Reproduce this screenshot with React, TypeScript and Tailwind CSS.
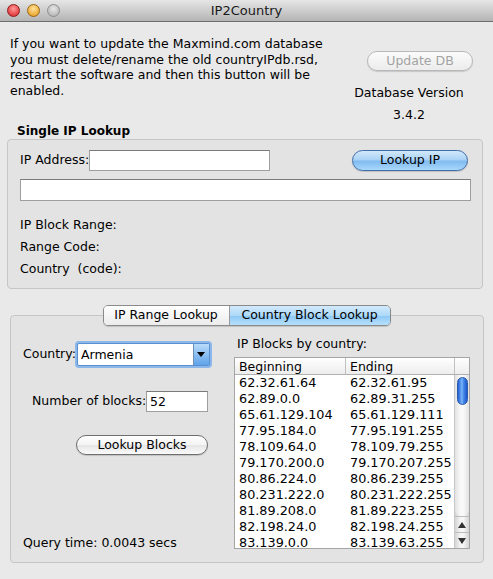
import React from 'react';

const font = { fontFamily: '"DejaVu Sans", "Lucida Grande", Verdana, sans-serif' };

const rows = [
    ['62.32.61.64', '62.32.61.95'],
    ['62.89.0.0', '62.89.31.255'],
    ['65.61.129.104', '65.61.129.111'],
    ['77.95.184.0', '77.95.191.255'],
    ['78.109.64.0', '78.109.79.255'],
    ['79.170.200.0', '79.170.207.255'],
    ['80.86.224.0', '80.86.239.255'],
    ['80.231.222.0', '80.231.222.255'],
    ['81.89.208.0', '81.89.223.255'],
    ['82.198.24.0', '82.198.24.255'],
    ['83.139.0.0', '83.139.63.255'],
];

function Light({ from, to, border }: { from: string; to: string; border: string }) {
    return (
        <span
            className="block size-[13px] rounded-full border"
            style={{ background: `radial-gradient(circle at 50% 35%, ${from}, ${to})`, borderColor: border }}
        />
    );
}

function AquaButton({ label, blue, disabled, className }: { label: string; blue?: boolean; disabled?: boolean; className: string }) {
    const skin = blue
        ? 'border-[#3f6ea8] bg-[linear-gradient(#d2e8fb_0%,#a9d2f6_48%,#7fbaf0_52%,#a8d8fb_100%)] text-black'
        : disabled
            ? 'border-[#b9b9b9] bg-[linear-gradient(#fbfbfb,#ececec)] text-[#a3a3a3]'
            : 'border-[#6e6e6e] bg-[linear-gradient(#ffffff_0%,#f4f4f4_48%,#e6e6e6_52%,#fafafa_100%)] text-black';
    return (
        <div className={`flex items-center justify-center rounded-full border text-[12.5px] shadow-[0_1px_1px_rgba(0,0,0,0.15)] ${skin} ${className}`}>
            {label}
        </div>
    );
}

export default function App() {
    return (
        <div className="w-[493px] h-[579px] bg-[#e9e9e9] flex flex-col overflow-hidden text-black text-[12px]" style={font}>
            {/* title bar */}
            <div className="relative shrink-0 h-[22px] flex items-center justify-center border-b border-[#6f6f6f] bg-[linear-gradient(#e6e6e6,#b4b4b4)]">
                <div className="absolute left-[7px] top-[4px] flex gap-[7px]">
                    <Light from="#ff9a9a" to="#d8191e" border="#8c1b1b" />
                    <Light from="#ffe39a" to="#e59310" border="#9a6512" />
                    <Light from="#e8e8e8" to="#a9a9a9" border="#8e8e8e" />
                </div>
                <span className="text-[13px] text-[#1a1a1a]">IP2Country</span>
            </div>

            {/* update section */}
            <div className="flex shrink-0">
                <p className="pl-[10px] pt-[14px] w-[345px] leading-[15.5px] text-[12.5px]">
                    If you want to update the Maxmind.com database you must delete/rename the old countryIPdb.rsd, restart the software and then this button will be enabled.
                </p>
                <div className="flex-1 flex flex-col items-center pr-[20px]">
                    <AquaButton label="Update DB" disabled className="self-end mt-[29px] w-[106px] h-[20px]" />
                    <div className="mt-[14px] leading-[16px] text-[12.5px]">Database Version</div>
                    <div className="mt-[6px] leading-[16px] text-[12.5px]">3.4.2</div>
                </div>
            </div>

            <div className="shrink-0 pl-[17px] leading-[16px] font-bold text-[12px]">Single IP Lookup</div>

            {/* single ip group */}
            <div className="shrink-0 mx-[7px] w-[476px] h-[150px] rounded-[4px] border border-[#c6c6c6] bg-[#e3e3e3] px-[12px] pt-[10px]">
                <div className="flex items-center">
                    <span className="text-[12.5px]">IP Address:</span>
                    <div className="w-[181px] h-[21px] bg-white border border-[#9e9e9e] border-t-[#7a7a7a]" />
                    <AquaButton label="Lookup IP" blue className="ml-auto mr-[2px] w-[116px] h-[21px]" />
                </div>
                <div className="mt-[8px] w-[451px] h-[22px] bg-white border border-[#9e9e9e] border-t-[#7a7a7a]" />
                <div className="mt-[16px] flex flex-col gap-[6px] leading-[16px] text-[12.5px]">
                    <span>IP Block Range:</span>
                    <span>Range Code:</span>
                    <span>Country&nbsp;&nbsp;(code):</span>
                </div>
            </div>

            {/* tabs */}
            <div className="relative shrink-0 z-10 mt-[16px] flex justify-center">
                <div className="flex h-[21px] rounded-[5px] border border-[#8a8a8a] overflow-hidden shadow-[0_1px_1px_rgba(0,0,0,0.15)] text-[12.5px]">
                    <div className="w-[126px] flex items-center justify-center bg-[linear-gradient(#ffffff,#ececec)] border-r border-[#9a9a9a]">IP Range Lookup</div>
                    <div className="w-[160px] flex items-center justify-center bg-[linear-gradient(#d3e9fc_0%,#addaf9_50%,#8ec8f5_52%,#b6e0fc_100%)]">Country Block Lookup</div>
                </div>
            </div>

            {/* country block group */}
            <div className="shrink-0 mx-[10px] mt-[-11px] w-[474px] h-[248px] rounded-[4px] border border-[#c6c6c6] bg-[#e3e3e3] flex">
                <div className="w-[223px] flex flex-col">
                    <div className="mt-[27px] ml-[12px] flex items-center">
                        <span className="text-[12.5px]">Country:</span>
                        <div className="ml-[1px] w-[133px] h-[23px] flex rounded-[2px] border border-[#5a8fd0] shadow-[0_0_0_2px_#8bb7ea] bg-white">
                            <span className="flex-1 pl-[3px] leading-[21px] text-[12.5px]">Armenia</span>
                            <div className="w-[16px] flex items-center justify-center bg-[linear-gradient(#b9dbfa,#5fa3ea)] border-l border-[#6f8fb5]">
                                <span className="block w-0 h-0 border-x-[4px] border-x-transparent border-t-[5px] border-t-black" />
                            </div>
                        </div>
                    </div>
                    <div className="mt-[25px] ml-[21px] flex items-center">
                        <span className="text-[12.5px]">Number of blocks:</span>
                        <div className="w-[62px] h-[21px] bg-white border border-[#9e9e9e] border-t-[#7a7a7a] pl-[3px] leading-[19px] text-[12.5px]">52</div>
                    </div>
                    <AquaButton label="Lookup Blocks" className="mt-[23px] ml-[65px] w-[132px] h-[20px]" />
                    <div className="mt-auto mb-[11px] ml-[12px] leading-[16px] text-[12.5px]">Query time: 0.0043 secs</div>
                </div>

                <div className="flex flex-col">
                    <div className="mt-[20px] ml-[3px] leading-[16px] text-[12.5px]">IP Blocks by country:</div>
                    <div className="mt-[5px] w-[236px] h-[192px] border border-[#a5a5a5] bg-white flex flex-col overflow-hidden">
                        <div className="flex h-[17px] shrink-0 border-b border-[#b0b0b0] bg-[linear-gradient(#ffffff,#ededed)] text-[12.5px] leading-[17px]">
                            <div className="w-[111px] pl-[4px] border-r border-[#c0c0c0]">Beginning</div>
                            <div className="w-[109px] pl-[4px] border-r border-[#c0c0c0]">Ending</div>
                            <div className="flex-1" />
                        </div>
                        <div className="flex flex-1 min-h-0">
                            <div className="flex-1 flex flex-col text-[12.8px] leading-[16px]">
                                {rows.map((r, i) => (
                                    <div key={i} className="flex h-[16px] shrink-0">
                                        <span className="w-[111px] pl-[4px]">{r[0]}</span>
                                        <span className="pl-[4px]">{r[1]}</span>
                                    </div>
                                ))}
                            </div>
                            {/* scrollbar */}
                            <div className="w-[15px] flex flex-col border-l border-[#c8c8c8] bg-[linear-gradient(90deg,#d4d4d4,#f6f6f6_40%,#f6f6f6_60%,#d4d4d4)]">
                                <div className="flex-1 rounded-b-full bg-[linear-gradient(90deg,#e2e2e2,#f9f9f9_40%,#f9f9f9_60%,#e2e2e2)] pt-[2px] flex justify-center">
                                    <div className="w-[11px] h-[28px] rounded-full border border-[#2b5aa8] bg-[linear-gradient(90deg,#1f5fd8,#7db8f8_45%,#4f93ee_55%,#1a56cc)]" />
                                </div>
                                <div className="h-[16px] flex items-center justify-center border-t border-[#bdbdbd]">
                                    <span className="block w-0 h-0 border-x-[4px] border-x-transparent border-b-[6px] border-b-[#333]" />
                                </div>
                                <div className="h-[16px] flex items-center justify-center border-t border-[#bdbdbd]">
                                    <span className="block w-0 h-0 border-x-[4px] border-x-transparent border-t-[6px] border-t-[#333]" />
                                </div>
                            </div>
                        </div>
                    </div>
                </div>
            </div>
        </div>
    );
}
